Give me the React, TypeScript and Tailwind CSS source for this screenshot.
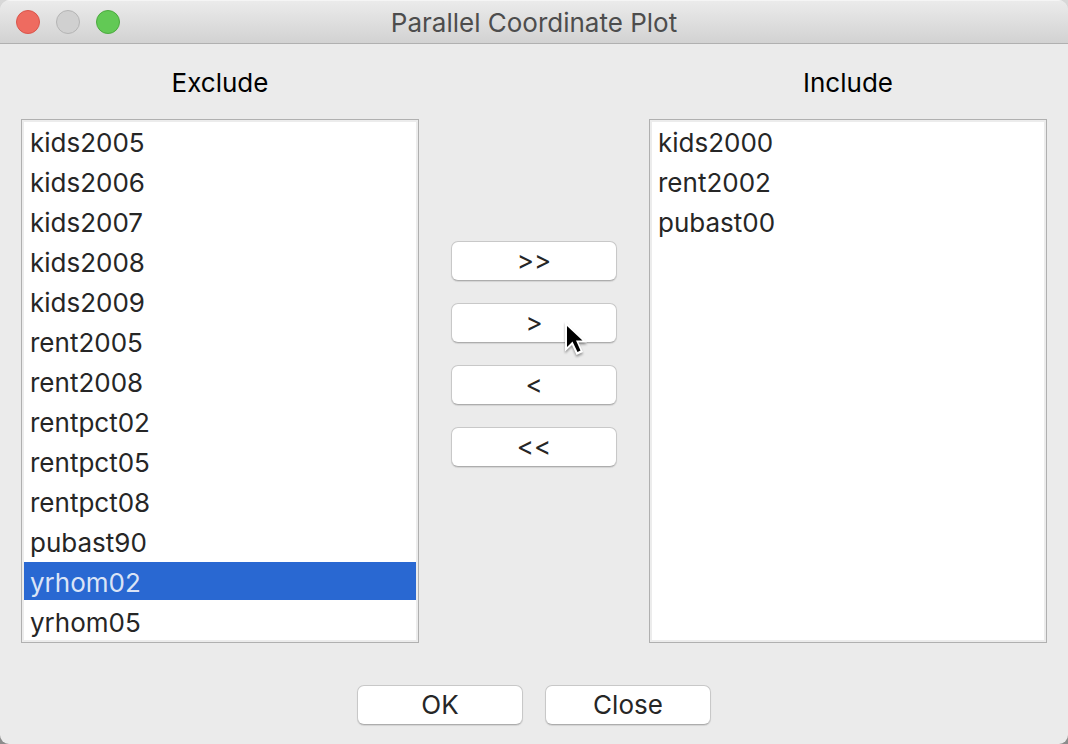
import { useState } from "react";

const EXCLUDED = [
  "kids2005", "kids2006", "kids2007", "kids2008", "kids2009",
  "rent2005", "rent2008", "rentpct02", "rentpct05", "rentpct08",
  "pubast90", "yrhom02", "yrhom05",
];
const INCLUDED = ["kids2000", "rent2002", "pubast00"];

type VariableListProps = {
  id: string;
  label: string;
  items: string[];
  selected: string[];
  onSelect: (names: string[]) => void;
};

function VariableList({ id, label, items, selected, onSelect }: VariableListProps) {
  return (
    <div className="flex min-w-0 flex-1 flex-col gap-[19px]">
      <label htmlFor={id} className="text-center text-[26px] leading-[34px] text-black">
        {label}
      </label>
      <div className="flex grow border border-[#b0b0b0] bg-[#ececec] p-0.5">
        <select
          id={id}
          multiple
          size={13}
          value={selected}
          onChange={(e) => onSelect(Array.from(e.target.selectedOptions, (o) => o.value))}
          className="h-[518px] w-full overflow-hidden rounded-none border-0 bg-white p-0 text-[26px] text-[#262626] outline-none"
        >
          {items.map((name) => (
            <option
              key={name}
              value={name}
              className="h-10 px-1.5 pt-[5px] pb-0 checked:bg-[linear-gradient(#2968d2_38px,white_38px)] checked:[-webkit-text-fill-color:#dbe4f6]"
            >
              {name}
            </option>
          ))}
        </select>
      </div>
    </div>
  );
}

function PushButton({ text, label, onClick }: { text: string; label?: string; onClick?: () => void }) {
  return (
    <button
      type="button"
      aria-label={label}
      onClick={onClick}
      className="h-10 w-[166px] rounded-[7px] border border-[#c8c8c8] border-b-[#adadad] bg-white text-[26px] leading-[38px] text-[#262626] shadow-[0_1px_1px_rgba(0,0,0,0.1)]"
    >
      {text}
    </button>
  );
}

function Pointer() {
  return (
    <svg
      aria-hidden="true"
      width="32"
      height="42"
      viewBox="0 0 32 42"
      className="pointer-events-none absolute top-[79px] left-[112px] drop-shadow-[0_2px_1px_rgba(0,0,0,0.35)]"
    >
      <path
        d="M2 1V31.500L9 25L13.500 35L20 32L15.500 22.500H24Z"
        fill="white"
      />
      <path d="M4 6V27L9.500 21.500L14.500 32L17.500 30.500L13 20.500H19.500Z" fill="black" />
    </svg>
  );
}

export default function App() {
  const [excluded, setExcluded] = useState(EXCLUDED);
  const [included, setIncluded] = useState(INCLUDED);
  const [left, setLeft] = useState<string[]>(["yrhom02"]);
  const [right, setRight] = useState<string[]>([]);

  const include = (names: string[]) => {
    setIncluded([...included, ...names]);
    setExcluded(excluded.filter((n) => !names.includes(n)));
    setLeft([]);
  };
  const exclude = (names: string[]) => {
    setExcluded([...excluded, ...names]);
    setIncluded(included.filter((n) => !names.includes(n)));
    setRight([]);
  };

  return (
    <div className="min-h-screen bg-linear-to-b from-[#d8d8d8] to-[#8c8c8c] font-['Inter','Liberation_Sans',sans-serif]">
      <main className="flex min-h-screen flex-col overflow-hidden rounded-t-[10px] rounded-b-[9px] bg-[#ebebeb]">
        <header className="grid h-11 grid-cols-[1fr_auto_1fr] items-center border-t border-b border-t-[#f5f5f5] border-b-[#b0b0b0] bg-linear-to-b from-[#ebebeb] to-[#d2d2d2] px-4">
          <div className="flex gap-4">
            <button type="button" aria-label="Close window" className="size-6 rounded-full border border-[#d9554b] bg-[#ee6b60]" />
            <button type="button" aria-label="Minimize window" disabled className="size-6 rounded-full border border-[#b4b4b4] bg-[#d0d0d0]" />
            <button type="button" aria-label="Zoom window" className="size-6 rounded-full border border-[#4ca93f] bg-[#62c955]" />
          </div>
          <h1 className="pt-0.5 text-[26px] leading-8 text-[#4d4d4d]">Parallel Coordinate Plot</h1>
        </header>

        <section className="flex gap-8 px-[21px] pt-[22px]">
          <VariableList id="exclude" label="Exclude" items={excluded} selected={left} onSelect={setLeft} />
          <div className="relative flex flex-col gap-[22px] pt-[175px]">
            <PushButton text=">>" label="Include all" onClick={() => include(excluded)} />
            <PushButton text=">" label="Include selected" onClick={() => include(left)} />
            <PushButton text="<" label="Exclude selected" onClick={() => exclude(right)} />
            <PushButton text="<<" label="Exclude all" onClick={() => exclude(included)} />
            <div className="absolute top-[175px] left-0">
              <Pointer />
            </div>
          </div>
          <VariableList id="include" label="Include" items={included} selected={right} onSelect={setRight} />
        </section>

        <footer className="flex justify-center gap-[22px] pt-[42px] pb-[19px]">
          <PushButton text="OK" />
          <PushButton text="Close" />
        </footer>
      </main>
    </div>
  );
}
